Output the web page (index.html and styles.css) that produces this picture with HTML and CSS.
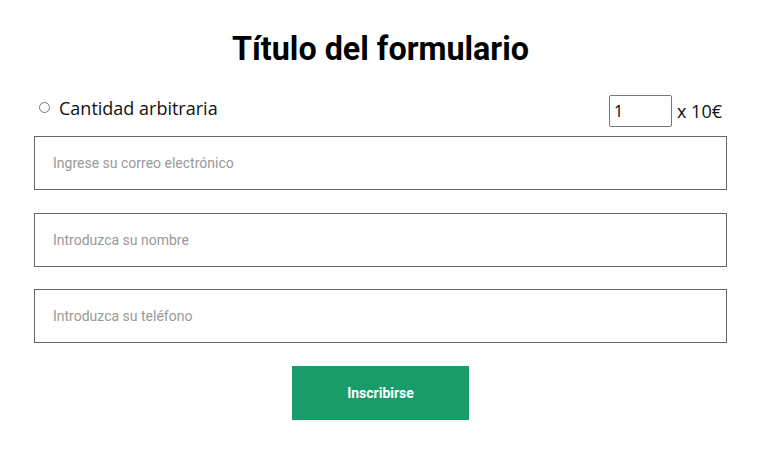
FILE: index.html
```html
<!DOCTYPE html>
<html lang="es">
<head>
<meta charset="utf-8">
<title>Formulario</title>
<link rel="stylesheet" href="styles.css">
</head>
<body>
<div class="page">
  <h1 class="title">Título del formulario</h1>
  <div class="amount-row">
    <label class="radio-label"><input type="radio" class="radio" name="amount"><span>Cantidad arbitraria</span></label>
    <div class="qty">
      <input type="number" class="qty-input" value="1">
      <span class="qty-text">x 10€</span>
    </div>
  </div>
  <form class="form">
    <input type="email" class="field" placeholder="Ingrese su correo electrónico">
    <input type="text" class="field" placeholder="Introduzca su nombre">
    <input type="tel" class="field" placeholder="Introduzca su teléfono">
    <button type="button" class="submit">Inscribirse</button>
  </form>
</div>
</body>
</html>
```

FILE: styles.css
```css
html, body {
  margin: 0;
  padding: 0;
  background: #fff;
}

.page {
  padding: 30.5px 39px 0 34px;
  font-family: Roboto, "Liberation Sans", sans-serif;
  color: #000;
}

.title {
  margin: 0 0 28.5px;
  font-family: Roboto, sans-serif;
  font-weight: 700;
  font-size: 32.3px;
  line-height: 36px;
  text-align: center;
}

.amount-row {
  display: flex;
  justify-content: space-between;
  align-items: flex-start;
  margin-bottom: 9px;
}

.radio-label {
  display: flex;
  align-items: flex-start;
  padding-top: 1px;
  font-family: "Open Sans", sans-serif;
  font-size: 18px;
  color: #111;
}

.radio {
  margin: 6px 9px 0 5px;
  width: 11px;
  height: 11px;
}

.qty {
  display: flex;
  align-items: center;
  padding-right: 5px;
}

.qty-input {
  box-sizing: border-box;
  width: 63px;
  height: 32px;
  border: 1px solid #767676;
  border-radius: 2px;
  padding: 0 4px;
  font-family: "Open Sans", sans-serif;
  font-size: 16px;
  color: #000;
  -moz-appearance: textfield;
}

.qty-input::-webkit-inner-spin-button,
.qty-input::-webkit-outer-spin-button {
  -webkit-appearance: none;
  margin: 0;
}

.qty-text {
  margin-left: 5px;
  font-family: "Open Sans", sans-serif;
  font-size: 18px;
  color: #111;
}

.form {
  display: flex;
  flex-direction: column;
  gap: 22.7px;
  margin: 0;
}

.field {
  box-sizing: border-box;
  width: 100%;
  height: 54px;
  border: 1px solid #666;
  border-radius: 0;
  padding: 0 18px;
  font-family: Roboto, sans-serif;
  font-size: 14px;
  color: #333;
  background: #fff;
}

.field::placeholder {
  color: #999;
  font-weight: 400;
}

.submit {
  align-self: center;
  width: 177px;
  height: 54px;
  border: none;
  background: #1a9c6a;
  color: #fff;
  font-family: Roboto, sans-serif;
  font-weight: 700;
  font-size: 14px;
  cursor: pointer;
}
```
